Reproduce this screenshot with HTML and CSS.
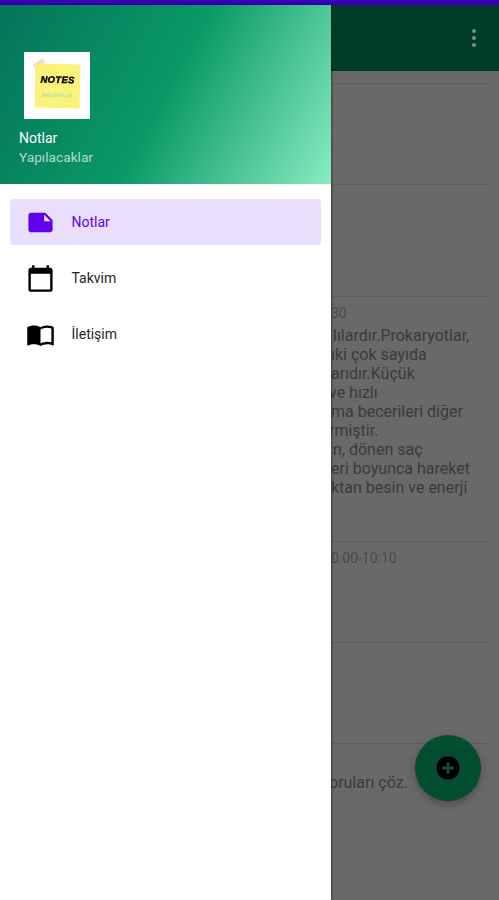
FILE: index.html
```html
<!DOCTYPE html>
<html lang="tr">
<head>
  <meta charset="UTF-8">
  <meta name="viewport" content="width=device-width, initial-scale=1.0">
  <title>Notlar</title>
  <link rel="stylesheet" href="styles.css">
</head>
<body>
<div class="screen">
  <div class="status-bar"></div>

  <div class="main">
    <div class="app-bar">
      <div class="more"><span></span><span></span><span></span></div>
    </div>
    <div class="notes">
      <div class="note"></div>
      <div class="note note-tall"></div>
      <div class="note note-long">
        <div class="note-time">30</div>
        <div class="note-body">
          <div class="nudge-right">lılardır.Prokaryotlar,</div>
          <div>ıki çok sayıda</div>
          <div>arıdır.Küçük</div>
          <div class="nudge-left">ve hızlı</div>
          <div>ma becerileri diğer</div>
          <div class="nudge-left">rmiştir.</div>
          <div class="nudge-right">n, dönen saç</div>
          <div>eri boyunca hareket</div>
          <div>ktan besin ve enerji</div>
        </div>
      </div>
      <div class="note">
        <div class="note-time">0:00-10:10</div>
      </div>
      <div class="note"></div>
      <div class="note note-last">
        <div class="note-body nudge-left">oruları çöz.</div>
      </div>
    </div>
    <button class="fab">
      <svg viewBox="0 0 24 24" width="28" height="28">
        <circle cx="12" cy="12" r="10" fill="#000"/>
        <path d="M13 7h-2v4H7v2h4v4h2v-4h4v-2h-4z" fill="#0a5a3c"/>
      </svg>
    </button>
  </div>

  <div class="drawer">
    <div class="drawer-header">
      <div class="logo">
        <div class="tape"></div>
        <div class="sticky">
          <div class="sticky-title">NOTES</div>
          <div class="sticky-sub">Bilinçli bir not</div>
        </div>
      </div>
      <div class="drawer-title">Notlar</div>
      <div class="drawer-sub">Yapılacaklar</div>
    </div>
    <div class="nav">
      <div class="nav-item active">
        <svg viewBox="0 0 24 24" width="29" height="29"><path d="M22 10l-6-6H4c-1.1 0-2 .9-2 2v12.01c0 1.1.9 1.99 2 1.99l16-.01c1.1 0 2-.89 2-1.99v-8zm-7-4.5l5.5 5.5H15V5.5z"/></svg>
        <span>Notlar</span>
      </div>
      <div class="nav-item">
        <svg viewBox="0 0 24 24" width="29" height="29"><path d="M20 3h-1V1h-2v2H7V1H5v2H4c-1.1 0-2 .9-2 2v16c0 1.1.9 2 2 2h16c1.1 0 2-.9 2-2V5c0-1.1-.9-2-2-2zm0 18H4V8h16v13z"/></svg>
        <span>Takvim</span>
      </div>
      <div class="nav-item">
        <svg viewBox="0 0 24 24" width="29" height="29"><path d="M21 5c-1.11-.35-2.33-.5-3.5-.5-1.95 0-4.05.4-5.5 1.5-1.45-1.1-3.55-1.5-5.5-1.5S2.45 4.9 1 6v14.65c0 .25.25.5.5.5.1 0 .15-.05.25-.05C3.1 20.45 5.05 20 6.5 20c1.95 0 4.05.4 5.5 1.5 1.35-.85 3.8-1.5 5.5-1.5 1.65 0 3.35.3 4.75 1.05.1.05.15.05.25.05.25 0 .5-.25.5-.5V6c-.6-.45-1.25-.75-2-1zm0 13.5c-1.1-.35-2.3-.5-3.5-.5-1.7 0-4.15.65-5.5 1.5V8c1.35-.85 3.8-1.5 5.5-1.5 1.2 0 2.4.15 3.5.5v11.5z"/></svg>
        <span>İletişim</span>
      </div>
    </div>
  </div>
</div>
</body>
</html>
```

FILE: styles.css
```css
* {
  box-sizing: border-box;
}
body {
  margin: 0;
  font-family: Roboto, sans-serif;
  background-color: #696969;
}
.screen {
  position: relative;
  width: 499px;
  height: 900px;
  overflow: hidden;
  display: flex;
  flex-direction: column;
}
.status-bar {
  height: 5px;
  background-color: #3700b3;
  flex-shrink: 0;
}

/* dimmed page behind the drawer */
.main {
  position: relative;
  flex: 1;
  background-color: #696969;
}
.app-bar {
  height: 66px;
  background-color: #003d28;
  display: flex;
  justify-content: flex-end;
  align-items: center;
  padding-right: 23px;
}
.more {
  display: flex;
  flex-direction: column;
  gap: 3px;
}
.more span {
  width: 4px;
  height: 4px;
  border-radius: 50%;
  background-color: #7e9189;
}
.notes {
  margin: 12px 11px 0 12px;
}
.note {
  height: 101px;
  border-top: 1px solid #5d5d5d;
  color: #3b3b3b;
  padding-left: 319px;
}
.note-tall {
  height: 112px;
}
.note-long {
  height: 245px;
}
.note-time {
  font-size: 14px;
  line-height: 16px;
  padding-top: 8px;
  color: #4a4a4a;
}
.note-body {
  font-size: 16px;
  line-height: 19px;
  padding-top: 5px;
  white-space: nowrap;
}
.note-last .note-body {
  padding-top: 29px;
}
.nudge-left {
  margin-left: -2px;
}
.nudge-right {
  margin-left: 2px;
}
.fab {
  position: absolute;
  left: 415px;
  top: 730px;
  width: 66px;
  height: 66px;
  border: none;
  border-radius: 50%;
  background-color: #034d31;
  box-shadow: 0 3px 8px rgba(0,0,0,0.3);
  display: flex;
  justify-content: center;
  align-items: center;
  padding: 0;
}

/* drawer */
.drawer {
  position: absolute;
  left: 0;
  top: 5px;
  bottom: 0;
  width: 331px;
  background-color: white;
  box-shadow: 1px 0 2px rgba(0,0,0,0.45);
}
.drawer-header {
  height: 179px;
  background: linear-gradient(118deg, #04745a 0%, #0a9966 50%, #88ecc2 100%);
  padding: 47px 0 0 19px;
}
.logo {
  position: relative;
  width: 66px;
  height: 67px;
  margin-left: 5px;
  background-color: white;
  display: flex;
  justify-content: center;
  align-items: center;
  filter: blur(0.4px);
}
.tape {
  position: absolute;
  left: 9px;
  top: 9px;
  width: 12px;
  height: 5px;
  background-color: #f6dccf;
  transform: rotate(-35deg);
}
.sticky {
  width: 45px;
  height: 44px;
  background-color: #fbf27a;
  transform: rotate(1deg);
  text-align: center;
  padding-top: 11px;
}
.sticky-title {
  font-family: "Liberation Sans", sans-serif;
  font-size: 9.5px;
  line-height: 10px;
  font-weight: bold;
  font-style: italic;
  letter-spacing: 0.3px;
  color: #000;
  -webkit-text-stroke: 0.4px #000;
}
.sticky-sub {
  font-size: 5px;
  line-height: 5px;
  margin-top: 8px;
  color: #7fdcc6;
  white-space: nowrap;
}
.drawer-title {
  margin-top: 10px;
  font-size: 14px;
  line-height: 19px;
  color: white;
}
.drawer-sub {
  font-size: 13.7px;
  line-height: 19px;
  color: rgba(255,255,255,0.7);
}
.nav {
  padding: 15px 10px 0;
  display: flex;
  flex-direction: column;
  gap: 10px;
}
.nav-item {
  height: 46px;
  border-radius: 4px;
  display: flex;
  align-items: center;
  padding-left: 16px;
  gap: 16.5px;
  font-size: 14px;
  color: #262626;
}
.nav-item svg {
  fill: #000;
  flex-shrink: 0;
}
.nav-item.active {
  background-color: #e9dffc;
  color: #6200ee;
}
.nav-item.active svg {
  fill: #6200ee;
}
```
